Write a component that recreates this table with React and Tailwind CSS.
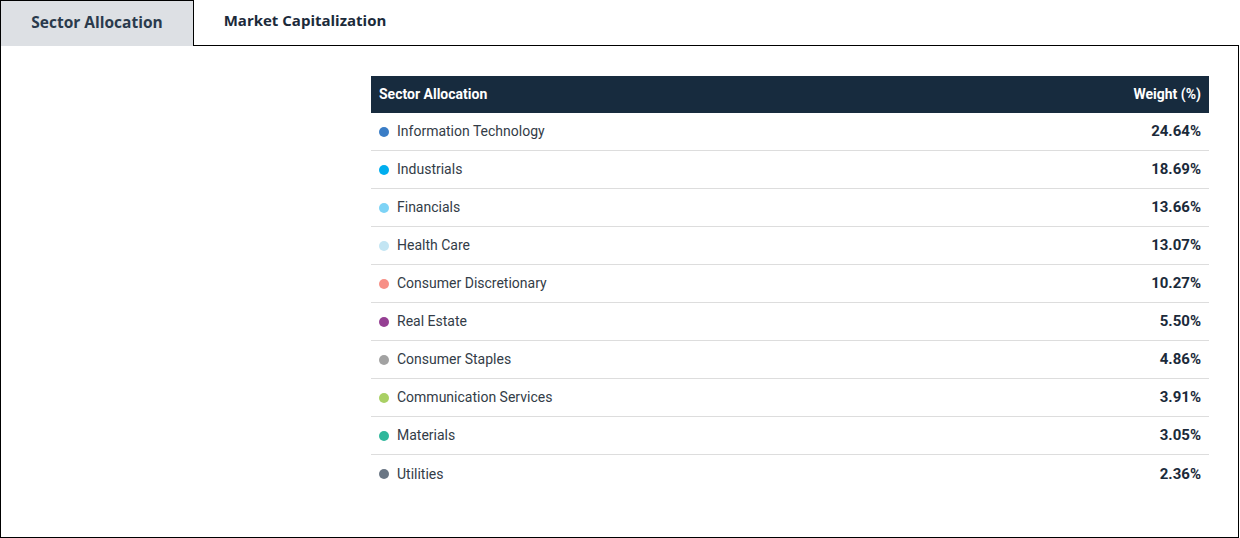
import React, { useState } from "react";

const SECTORS = [
  { name: "Information Technology", weight: "24.64%", dot: "bg-[#3a7dc6]" },
  { name: "Industrials", weight: "18.69%", dot: "bg-[#00aeef]" },
  { name: "Financials", weight: "13.66%", dot: "bg-[#7dd3f6]" },
  { name: "Health Care", weight: "13.07%", dot: "bg-[#c3e5f3]" },
  { name: "Consumer Discretionary", weight: "10.27%", dot: "bg-[#f78f86]" },
  { name: "Real Estate", weight: "5.50%", dot: "bg-[#953f93]" },
  { name: "Consumer Staples", weight: "4.86%", dot: "bg-[#a2a2a2]" },
  { name: "Communication Services", weight: "3.91%", dot: "bg-[#a9d064]" },
  { name: "Materials", weight: "3.05%", dot: "bg-[#2fb79b]" },
  { name: "Utilities", weight: "2.36%", dot: "bg-[#6a7684]" },
];

export default function App() {
  const [tab, setTab] = useState("sector");

  return (
    <div className="w-[1240px] h-[538px] bg-white font-['Roboto',_'Liberation_Sans',_sans-serif] text-[#1b2a3a]">
      {/* tabs */}
      <div className="flex h-[46px] font-['Open_Sans',_'Liberation_Sans',_sans-serif]">
        <button
          onClick={() => setTab("sector")}
          className="w-[194px] h-[46px] border border-b-0 border-black bg-[#dde0e4] text-[15.5px] font-bold text-[#2a3a4c] pb-[1px]"
        >
          Sector Allocation
        </button>
        <button
          onClick={() => setTab("market")}
          className="w-[222px] h-[46px] border-b border-black text-[15px] font-bold text-[#1b2a3a] pb-[4px]"
        >
          Market Capitalization
        </button>
        <div className="w-[823px] h-[46px] border-b border-black" />
      </div>

      {/* panel */}
      <div className="w-[1239px] h-[492px] border border-t-0 border-black pt-[30px] pl-[370px] pr-[29px]">
        <div className="w-[838px]">
          <div className="flex items-center justify-between h-[37px] bg-[#172b3e] px-[8px] text-[14px] font-bold text-white">
            <span>Sector Allocation</span>
            <span>Weight (%)</span>
          </div>
          {SECTORS.map((s, i) => (
            <div
              key={s.name}
              className={
                "flex items-center justify-between h-[38px] px-[8px] text-[14px] " +
                (i < SECTORS.length - 1 ? "border-b border-[#dddddd]" : "")
              }
            >
              <div className="flex items-center gap-[8px] text-[#333c47]">
                <span className={"w-[10px] h-[10px] rounded-full " + s.dot} />
                <span>{s.name}</span>
              </div>
              <span className="text-[15px] font-bold text-[#1b2a3a]">{s.weight}</span>
            </div>
          ))}
        </div>
      </div>
    </div>
  );
}
